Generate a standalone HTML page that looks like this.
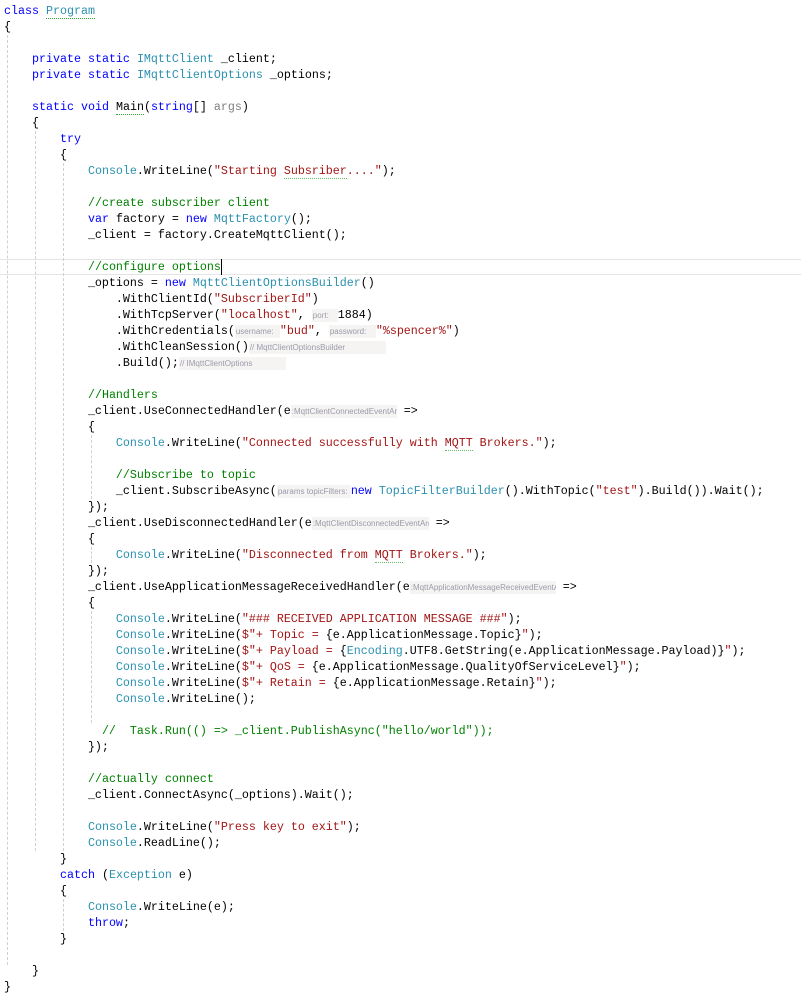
<!DOCTYPE html>
<html><head><meta charset="utf-8"><style>
body{margin:0;width:801px;height:984px;background:#fff;position:relative;overflow:hidden}
.l{position:absolute;left:4px;height:16px;line-height:16px;white-space:pre;font-family:"Liberation Mono",monospace;font-size:11.67px;color:#000}
.k{color:#0000ff}.t{color:#2b91af}.s{color:#a31515}.c{color:#008000}.g{color:#808080}
.h{display:inline-block;vertical-align:top;margin-top:2px;height:13px;line-height:13px;background:#f5f4f2;color:#9a9aaa;font-family:"Liberation Sans",sans-serif;font-size:8px;overflow:hidden;white-space:nowrap;padding:0 1px;box-sizing:border-box}
.sq{border-bottom:1px dotted #3a3}
.wv{border-bottom:1px dotted #6b6}
.gd{position:absolute;width:0;border-left:1px dashed #d0d0d0}
</style></head><body>
<div style="position:absolute;left:0;top:259px;width:801px;height:16px;border-top:1px solid #e4e4e4;border-bottom:1px solid #e4e4e4;box-sizing:border-box"></div>
<div class="gd" style="left:7px;top:35px;height:930px"></div>
<div class="gd" style="left:35px;top:131px;height:720px"></div>
<div class="gd" style="left:63px;top:163px;height:688px"></div>
<div class="gd" style="left:63px;top:899px;height:32px"></div>
<div class="gd" style="left:91px;top:435px;height:64px"></div>
<div class="gd" style="left:91px;top:547px;height:16px"></div>
<div class="gd" style="left:91px;top:611px;height:112px"></div>
<div style="position:absolute;left:221px;top:259px;width:1px;height:16px;background:#000"></div>

<div class="l" style="top:3px"><span class="k">class</span> <span class="t sq">Program</span></div>
<div class="l" style="top:19px">{</div>
<div class="l" style="top:51px">    <span class="k">private</span> <span class="k">static</span> <span class="t">IMqttClient</span> _client;</div>
<div class="l" style="top:67px">    <span class="k">private</span> <span class="k">static</span> <span class="t">IMqttClientOptions</span> _options;</div>
<div class="l" style="top:99px">    <span class="k">static</span> <span class="k">void</span> <span class="sq">Main</span>(<span class="k">string</span>[] <span class="g">args</span>)</div>
<div class="l" style="top:115px">    {</div>
<div class="l" style="top:131px">        <span class="k">try</span></div>
<div class="l" style="top:147px">        {</div>
<div class="l" style="top:163px">            <span class="t">Console</span>.WriteLine(<span class="s">"Starting <span class="wv">Subsriber</span>...."</span>);</div>
<div class="l" style="top:195px">            <span class="c">//create subscriber client</span></div>
<div class="l" style="top:211px">            <span class="k">var</span> factory = <span class="k">new</span> <span class="t">MqttFactory</span>();</div>
<div class="l" style="top:227px">            _client = factory.CreateMqttClient();</div>
<div class="l" style="top:259px">            <span class="c">//configure options</span></div>
<div class="l" style="top:275px">            _options = <span class="k">new</span> <span class="t">MqttClientOptionsBuilder</span>()</div>
<div class="l" style="top:291px">                .WithClientId(<span class="s">"SubscriberId"</span>)</div>
<div class="l" style="top:307px">                .WithTcpServer(<span class="s">"localhost"</span>, <span class="h" style="width:26px">port:</span>1884)</div>
<div class="l" style="top:323px">                .WithCredentials(<span class="h" style="width:45px">username:</span><span class="s">"bud"</span>, <span class="h" style="width:47px">password:</span><span class="s">"%spencer%"</span>)</div>
<div class="l" style="top:339px">                .WithCleanSession()<span class="h" style="width:137px">// MqttClientOptionsBuilder</span></div>
<div class="l" style="top:355px">                .Build();<span class="h" style="width:107px">// IMqttClientOptions</span></div>
<div class="l" style="top:387px">            <span class="c">//Handlers</span></div>
<div class="l" style="top:403px">            _client.UseConnectedHandler(e<span class="h" style="width:106px">:MqttClientConnectedEventArgs</span> =&gt;</div>
<div class="l" style="top:419px">            {</div>
<div class="l" style="top:435px">                <span class="t">Console</span>.WriteLine(<span class="s">"Connected successfully with <span class="wv">MQTT</span> Brokers."</span>);</div>
<div class="l" style="top:467px">                <span class="c">//Subscribe to topic</span></div>
<div class="l" style="top:483px">                _client.SubscribeAsync(<span class="h" style="width:74px">params topicFilters:</span><span class="k">new</span> <span class="t">TopicFilterBuilder</span>().WithTopic(<span class="s">"test"</span>).Build()).Wait();</div>
<div class="l" style="top:499px">            });</div>
<div class="l" style="top:515px">            _client.UseDisconnectedHandler(e<span class="h" style="width:117px">:MqttClientDisconnectedEventArgs</span> =&gt;</div>
<div class="l" style="top:531px">            {</div>
<div class="l" style="top:547px">                <span class="t">Console</span>.WriteLine(<span class="s">"Disconnected from <span class="wv">MQTT</span> Brokers."</span>);</div>
<div class="l" style="top:563px">            });</div>
<div class="l" style="top:579px">            _client.UseApplicationMessageReceivedHandler(e<span class="h" style="width:146px">:MqttApplicationMessageReceivedEventArgs</span> =&gt;</div>
<div class="l" style="top:595px">            {</div>
<div class="l" style="top:611px">                <span class="t">Console</span>.WriteLine(<span class="s">"### RECEIVED APPLICATION MESSAGE ###"</span>);</div>
<div class="l" style="top:627px">                <span class="t">Console</span>.WriteLine(<span class="s">$"+ Topic = </span>{e.ApplicationMessage.Topic}<span class="s">"</span>);</div>
<div class="l" style="top:643px">                <span class="t">Console</span>.WriteLine(<span class="s">$"+ Payload = </span>{<span class="t">Encoding</span>.UTF8.GetString(e.ApplicationMessage.Payload)}<span class="s">"</span>);</div>
<div class="l" style="top:659px">                <span class="t">Console</span>.WriteLine(<span class="s">$"+ QoS = </span>{e.ApplicationMessage.QualityOfServiceLevel}<span class="s">"</span>);</div>
<div class="l" style="top:675px">                <span class="t">Console</span>.WriteLine(<span class="s">$"+ Retain = </span>{e.ApplicationMessage.Retain}<span class="s">"</span>);</div>
<div class="l" style="top:691px">                <span class="t">Console</span>.WriteLine();</div>
<div class="l" style="top:723px">              <span class="c">//  Task.Run(() =&gt; _client.PublishAsync("hello/world"));</span></div>
<div class="l" style="top:739px">            });</div>
<div class="l" style="top:771px">            <span class="c">//actually connect</span></div>
<div class="l" style="top:787px">            _client.ConnectAsync(_options).Wait();</div>
<div class="l" style="top:819px">            <span class="t">Console</span>.WriteLine(<span class="s">"Press key to exit"</span>);</div>
<div class="l" style="top:835px">            <span class="t">Console</span>.ReadLine();</div>
<div class="l" style="top:851px">        }</div>
<div class="l" style="top:867px">        <span class="k">catch</span> (<span class="t">Exception</span> e)</div>
<div class="l" style="top:883px">        {</div>
<div class="l" style="top:899px">            <span class="t">Console</span>.WriteLine(e);</div>
<div class="l" style="top:915px">            <span class="k">throw</span>;</div>
<div class="l" style="top:931px">        }</div>
<div class="l" style="top:963px">    }</div>
<div class="l" style="top:979px">}</div>
</body></html>
